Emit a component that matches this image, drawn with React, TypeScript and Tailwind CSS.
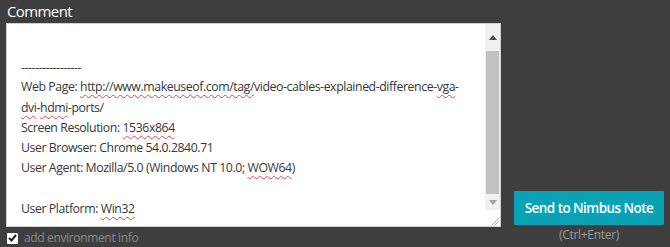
const squiggle = 'underline decoration-wavy decoration-[#e0454f] decoration-1 underline-offset-[3px]'

function Scrollbar() {
  return (
    <div className="flex w-[15px] shrink-0 flex-col bg-[#f1f1f1]">
      <div className="flex h-[27px] items-center justify-center">
        <svg width="8" height="5" viewBox="0 0 8 5">
          <path d="M0 5 L4 0 L8 5 Z" fill="#505050" />
        </svg>
      </div>
      <div className="mx-[1px] h-[143px] bg-[#c1c1c1]" />
      <div className="flex h-[16px] items-center justify-center">
        <svg width="8" height="5" viewBox="0 0 8 5">
          <path d="M0 0 L4 5 L8 0 Z" fill="#a3a3a3" />
        </svg>
      </div>
      <div className="relative flex-1 bg-white">
        <svg className="absolute right-[1px] bottom-[1px]" width="8" height="8" viewBox="0 0 8 8">
          <path d="M1 8 L8 1 M4 8 L8 4" stroke="#b0b0b0" strokeWidth="1" />
        </svg>
      </div>
    </div>
  )
}

export default function App() {
  return (
    <div
      className="flex h-[247px] w-[670px] overflow-hidden bg-[#3e3e3e]"
      style={{ fontFamily: '"Open Sans", sans-serif' }}
    >
      {/* Left column: label, text area, checkbox */}
      <div className="ml-[6px] flex w-[495px] shrink-0 flex-col">
        <div className="h-[23px] pt-[1px] pl-[1px] text-[15px] leading-[20px] tracking-[-0.6px] text-white">
          Comment
        </div>

        <div className="flex h-[204px] overflow-hidden border border-[#d0d0d0] bg-white">
          <div className="min-w-0 flex-1 overflow-hidden whitespace-nowrap pt-[13px] pl-[14px] text-[12.3px] leading-[20.2px] tracking-[-0.42px] text-[#383838]">
            <div>&nbsp;</div>
            <div className="translate-y-[1px]">-----------------</div>
            <div>
              Web Page: <span className={squiggle}>http://www.makeuseof.com/tag/</span>video-cables-explained-difference-<span className={squiggle}>vga</span>-
            </div>
            <div>
              <span className={squiggle}>dvi</span>-<span className={squiggle}>hdmi</span>-ports/
            </div>
            <div>
              Screen Resolution: <span className={squiggle}>1536x864</span>
            </div>
            <div>User Browser: Chrome 54.0.2840.71</div>
            <div>
              User Agent: Mozilla/5.0 (Windows NT 10.0; <span className={squiggle}>WOW64</span>)
            </div>
            <div>&nbsp;</div>
            <div>
              User Platform: <span className={squiggle}>Win32</span>
            </div>
          </div>
          <Scrollbar />
        </div>

        <div className="mt-[2px] flex items-center gap-[6px] pl-[1px]">
          <div className="flex h-[11px] w-[11px] items-center justify-center rounded-[1px] bg-white">
            <svg width="9" height="8" viewBox="0 0 9 8">
              <path d="M1 4 L3.5 6.5 L8 1" stroke="#222" strokeWidth="2" fill="none" />
            </svg>
          </div>
          <span className="text-[12px] leading-[18px] tracking-[-0.35px] text-[#8a8a8a]">add environment info</span>
        </div>
      </div>

      {/* Right column: send button */}
      <div className="ml-[13px] flex w-[150px] shrink-0 flex-col items-center pt-[191px]">
        <button className="h-[34px] w-[150px] rounded-[1px] bg-[#0aa3b6] text-[13.5px] font-semibold tracking-[-0.55px] text-white">
          Send to Nimbus Note
        </button>
        <span className="mt-[1px] text-[12px] leading-[18px] tracking-[-0.3px] text-[#9a9a9a]">(Ctrl+Enter)</span>
      </div>
    </div>
  )
}
